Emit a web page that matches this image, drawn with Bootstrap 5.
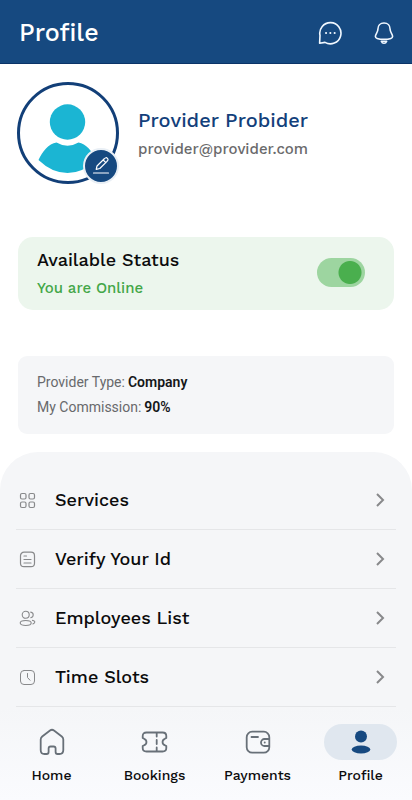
<!DOCTYPE html>
<html lang="en">
<head>
<meta charset="utf-8">
<meta name="viewport" content="width=device-width, initial-scale=1">
<title>Profile</title>
<link rel="stylesheet" href="https://cdn.jsdelivr.net/npm/bootstrap@5.3.0/dist/css/bootstrap.min.css">
<style>
:root { --brand: #164980; --soft: #f5f6f8; }
body { font-family: "Work Sans", Inter, sans-serif; font-weight: 500; color: #0b0b0c; background: #fff; }
svg { display: block; fill: none; stroke: currentColor; stroke-linecap: round; stroke-linejoin: round; }
.app-header { height: 64px; padding: 2px 17px 0 19px; background: var(--brand); border-bottom: 1px solid #0b3468; color: #fff; }
.app-title { font-size: 25px; line-height: 28px; font-weight: 500; }
.header-actions { gap: 31px; }
.icon-btn { color: #f1f8ff; }
.identity { padding: 18px 17px 0; gap: 19px; }
.avatar { width: 102px; height: 102px; border: 3px solid #123f78; }
.edit-btn { right: -3px; bottom: -3px; width: 36px; height: 36px; background: #164980; border: 2px solid #e9eff5; color: #fff; }
.person-name { font-size: 20px; line-height: 24px; color: #133f7b; }
.person-mail { font-size: 15px; line-height: 18px; margin-top: 8px; color: #6a6a6c; }
.status-card { margin: 53px 18px 0; padding: 10px 29px 12px 19px; border-radius: 15px; background: #ecf6ed; }
.status-title { font-size: 18px; line-height: 25px; }
.status-text { font-size: 15px; line-height: 20px; margin-top: 6px; color: #43a748; }
.form-switch .status-switch { width: 48px; height: 29px; border: 0; background-color: #9dd5a0; background-image: radial-gradient(circle at center, #4aaf4e 11px, transparent 12px); background-size: 30px 29px; background-position: left center; }
.form-switch .status-switch:checked { background-color: #9dd5a0; background-image: radial-gradient(circle at center, #4aaf4e 11px, transparent 12px); background-position: right center; }
.info-card { margin: 46px 18px 0; padding: 14px 19px; border-radius: 9px; background: var(--soft); font: 400 14px/25px Roboto, sans-serif; color: #68696c; }
.info-card dt { font-weight: 400; }
.info-card dd { font-weight: 600; color: #151719; }
.info-line { gap: 3px; }
.menu-panel { margin-top: 18px; padding: 19px 16px 0; border-radius: 38px 38px 0 0; background: var(--soft); }
.menu-link { height: 59px; padding: 0 10px 0 3px; border-bottom: 1px solid #e5e6e8; color: #0b0b0c; font-size: 18px; line-height: 24px; }
.menu-link svg { color: #88898b; }
.menu-link .chevron { stroke-linecap: butt; stroke-linejoin: miter; }
.menu-name { margin-left: 19px; }
.tab-bar { padding: 16px 0; background: linear-gradient(#f5f6f8, #fafbfe); }
.tab-link { color: #0b0b0c; font-size: 14px; line-height: 18px; gap: 6px; }
.tab-icon { width: 73px; height: 36px; color: #687078; }
.tab-link.active .tab-icon { background: #e0e7ef; color: var(--brand); }
</style>
<script src="https://cdn.jsdelivr.net/npm/bootstrap@5.3.0/dist/js/bootstrap.bundle.min.js" defer></script>
</head>
<body class="d-flex flex-column min-vh-100">
<header class="app-header d-flex align-items-center justify-content-between">
  <h1 class="app-title m-0">Profile</h1>
  <div class="header-actions d-flex align-items-center">
    <button type="button" class="icon-btn btn border-0 p-0" aria-label="Messages">
      <svg width="24" height="24" viewBox="0 0 24 24" stroke-width="1.6"><path d="M1.6 22.2 2 14.5A10.6 10.6 0 1 1 7 21.4Q5 21.7 1.6 22.2Z"/><path d="M8 12h.1M12.3 12h.1M16.6 12h.1" stroke-width="2"/></svg>
    </button>
    <button type="button" class="icon-btn btn border-0 p-0" aria-label="Notifications">
      <svg width="22" height="24" viewBox="0 0 22 24" stroke-width="1.6"><path d="M11 2C7.200 2 4.900 4.800 4.900 8.200 4.900 11.500 2.400 12.900 2.400 15.400 2.400 17.600 6.500 18.300 11 18.300S19.600 17.600 19.600 15.400C19.600 12.900 17.100 11.500 17.100 8.200 17.100 4.800 14.800 2 11 2Z"/><path d="M8.300 20.300Q9.100 22.300 11 22.300T13.700 20.300Z"/></svg>
    </button>
  </div>
</header>

<main class="flex-grow-1 d-flex flex-column">
  <section class="identity d-flex align-items-center">
    <div class="avatar rounded-circle position-relative flex-shrink-0">
      <svg width="96" height="96" viewBox="0 0 96 96" role="img" aria-label="Profile picture"><g fill="#1bb5d3" stroke="none"><circle cx="47.500" cy="37" r="17.700"/><path d="M36.500 57.500Q47.500 64 58.500 57.500C66 59 72 65.500 76 75Q63 88 47.500 88T18.500 75C22.500 66 28.500 59 36.500 57.500Z"/></g></svg>
      <button type="button" class="edit-btn btn rounded-circle position-absolute p-0 d-flex align-items-center justify-content-center" aria-label="Edit profile">
        <svg width="18" height="18" viewBox="0 0 18 18" stroke-width="1.200"><path d="M4.200 12.300 5 9 12.300 1.800Q14-.1 15.400 1.300T15 4.300L7.800 11.500ZM11.200 3 13.900 5.600M1.500 16h15"/></svg>
      </button>
    </div>
    <div>
      <h2 class="person-name fw-medium m-0">Provider Probider</h2>
      <p class="person-mail mb-0">provider@provider.com</p>
    </div>
  </section>

  <section class="status-card d-flex align-items-center justify-content-between">
    <div>
      <label class="status-title d-block" for="available">Available Status</label>
      <p class="status-text mb-0">You are Online</p>
    </div>
    <div class="form-switch p-0">
      <input class="status-switch form-check-input d-block m-0" type="checkbox" role="switch" id="available" checked>
    </div>
  </section>

  <dl class="info-card mb-0">
    <div class="info-line d-flex"><dt>Provider Type:</dt><dd class="m-0">Company</dd></div>
    <div class="info-line d-flex"><dt>My Commission:</dt><dd class="m-0">90%</dd></div>
  </dl>

  <nav class="menu-panel flex-grow-1" aria-label="Provider settings">
    <a class="menu-link d-flex align-items-center text-decoration-none" href="#services">
      <svg width="17" height="17" viewBox="0 0 17 17" stroke-width="1.200"><rect x="1.500" y="1.500" width="5.500" height="5.500" rx="1.500"/><rect x="10" y="1.500" width="5.500" height="5.500" rx="1.500"/><rect x="1.500" y="10" width="5.500" height="5.500" rx="1.500"/><rect x="10" y="10" width="5.500" height="5.500" rx="1.500"/></svg>
      <span class="menu-name flex-grow-1">Services</span>
      <svg class="chevron" width="12" height="16" viewBox="0 0 12 16" stroke-width="2"><path d="m3 2 6 6-6 6"/></svg>
    </a>
    <a class="menu-link d-flex align-items-center text-decoration-none" href="#verify">
      <svg width="17" height="17" viewBox="0 0 17 17" stroke-width="1.200"><rect x="1.500" y="1.200" width="14" height="14.500" rx="3.500"/><path d="M5 5h2.500M5 8.500h7M5 12h7"/></svg>
      <span class="menu-name flex-grow-1">Verify Your Id</span>
      <svg class="chevron" width="12" height="16" viewBox="0 0 12 16" stroke-width="2"><path d="m3 2 6 6-6 6"/></svg>
    </a>
    <a class="menu-link d-flex align-items-center text-decoration-none" href="#employees">
      <svg width="17" height="17" viewBox="0 0 17 17" stroke-width="1.100"><circle cx="6.700" cy="4.800" r="3.500"/><ellipse cx="6.700" cy="13" rx="5.500" ry="2.500"/><path d="M11.700 2.100Q14.400 2.600 14.200 5T11.900 7.600M13.500 10.400Q16.200 11 15.700 12.400T14 13.900"/></svg>
      <span class="menu-name flex-grow-1">Employees List</span>
      <svg class="chevron" width="12" height="16" viewBox="0 0 12 16" stroke-width="2"><path d="m3 2 6 6-6 6"/></svg>
    </a>
    <a class="menu-link d-flex align-items-center text-decoration-none" href="#slots">
      <svg width="17" height="17" viewBox="0 0 17 17" stroke-width="1"><rect x="1.500" y="1.500" width="14" height="14" rx="3.500"/><path d="M8.500 4.500v4l2.500 2.700"/></svg>
      <span class="menu-name flex-grow-1">Time Slots</span>
      <svg class="chevron" width="12" height="16" viewBox="0 0 12 16" stroke-width="2"><path d="m3 2 6 6-6 6"/></svg>
    </a>
  </nav>
</main>

<nav class="tab-bar sticky-bottom" aria-label="Main">
  <div class="row row-cols-4 g-0">
    <a class="tab-link col d-flex flex-column align-items-center text-decoration-none" href="#home">
      <span class="tab-icon rounded-pill d-flex align-items-center justify-content-center"><svg width="26" height="28" viewBox="0 0 26 28" stroke-width="1.800"><path d="M1.700 11.500Q1.700 9.800 3.200 8.500L11 2.500Q13 1 15 2.500L22.800 8.500Q24.300 9.800 24.300 11.500V22Q24.300 26 20.500 26H18.500Q16.600 26 16.600 24V20.500Q16.600 18.500 14.600 18.500H11.600Q9.600 18.500 9.600 20.500V24Q9.600 26 7.600 26H5.500Q1.700 26 1.700 22Z"/></svg></span>
      <span>Home</span>
    </a>
    <a class="tab-link col d-flex flex-column align-items-center text-decoration-none" href="#bookings">
      <span class="tab-icon rounded-pill d-flex align-items-center justify-content-center"><svg width="27" height="24" viewBox="0 0 27 24" stroke-width="1.800"><path d="M5.500 2.500H21.500Q25.300 2.500 25.300 6V8L23.800 8.800A3.400 3.400 0 0 0 23.800 15.200L25.300 16V18Q25.300 21.500 21.500 21.500H5.500Q1.700 21.500 1.700 18V16L3.200 15.200A3.400 3.400 0 0 0 3.200 8.800L1.700 8V6Q1.700 2.500 5.500 2.500Z"/><path d="M15.700 3v3.500M15.700 10v4M15.700 17.500V21"/></svg></span>
      <span>Bookings</span>
    </a>
    <a class="tab-link col d-flex flex-column align-items-center text-decoration-none" href="#payments">
      <span class="tab-icon rounded-pill d-flex align-items-center justify-content-center"><svg width="26" height="24" viewBox="0 0 26 24" stroke-width="1.800"><rect x="1.700" y="1.700" width="22.600" height="21" rx="5.500"/><path d="M6.500 7h6.500M24 9h-4.500a3.500 3.500 0 0 0 0 7H24M19.700 12.500h.1"/></svg></span>
      <span>Payments</span>
    </a>
    <a class="tab-link active col d-flex flex-column align-items-center text-decoration-none" href="#profile" aria-current="page">
      <span class="tab-icon rounded-pill d-flex align-items-center justify-content-center"><svg width="20" height="24" viewBox="0 0 20 24"><g fill="currentColor" stroke="none"><circle cx="10" cy="6.500" r="6"/><ellipse cx="10" cy="19.500" rx="9.300" ry="4"/></g></svg></span>
      <span>Profile</span>
    </a>
  </div>
</nav>
</body>
</html>
